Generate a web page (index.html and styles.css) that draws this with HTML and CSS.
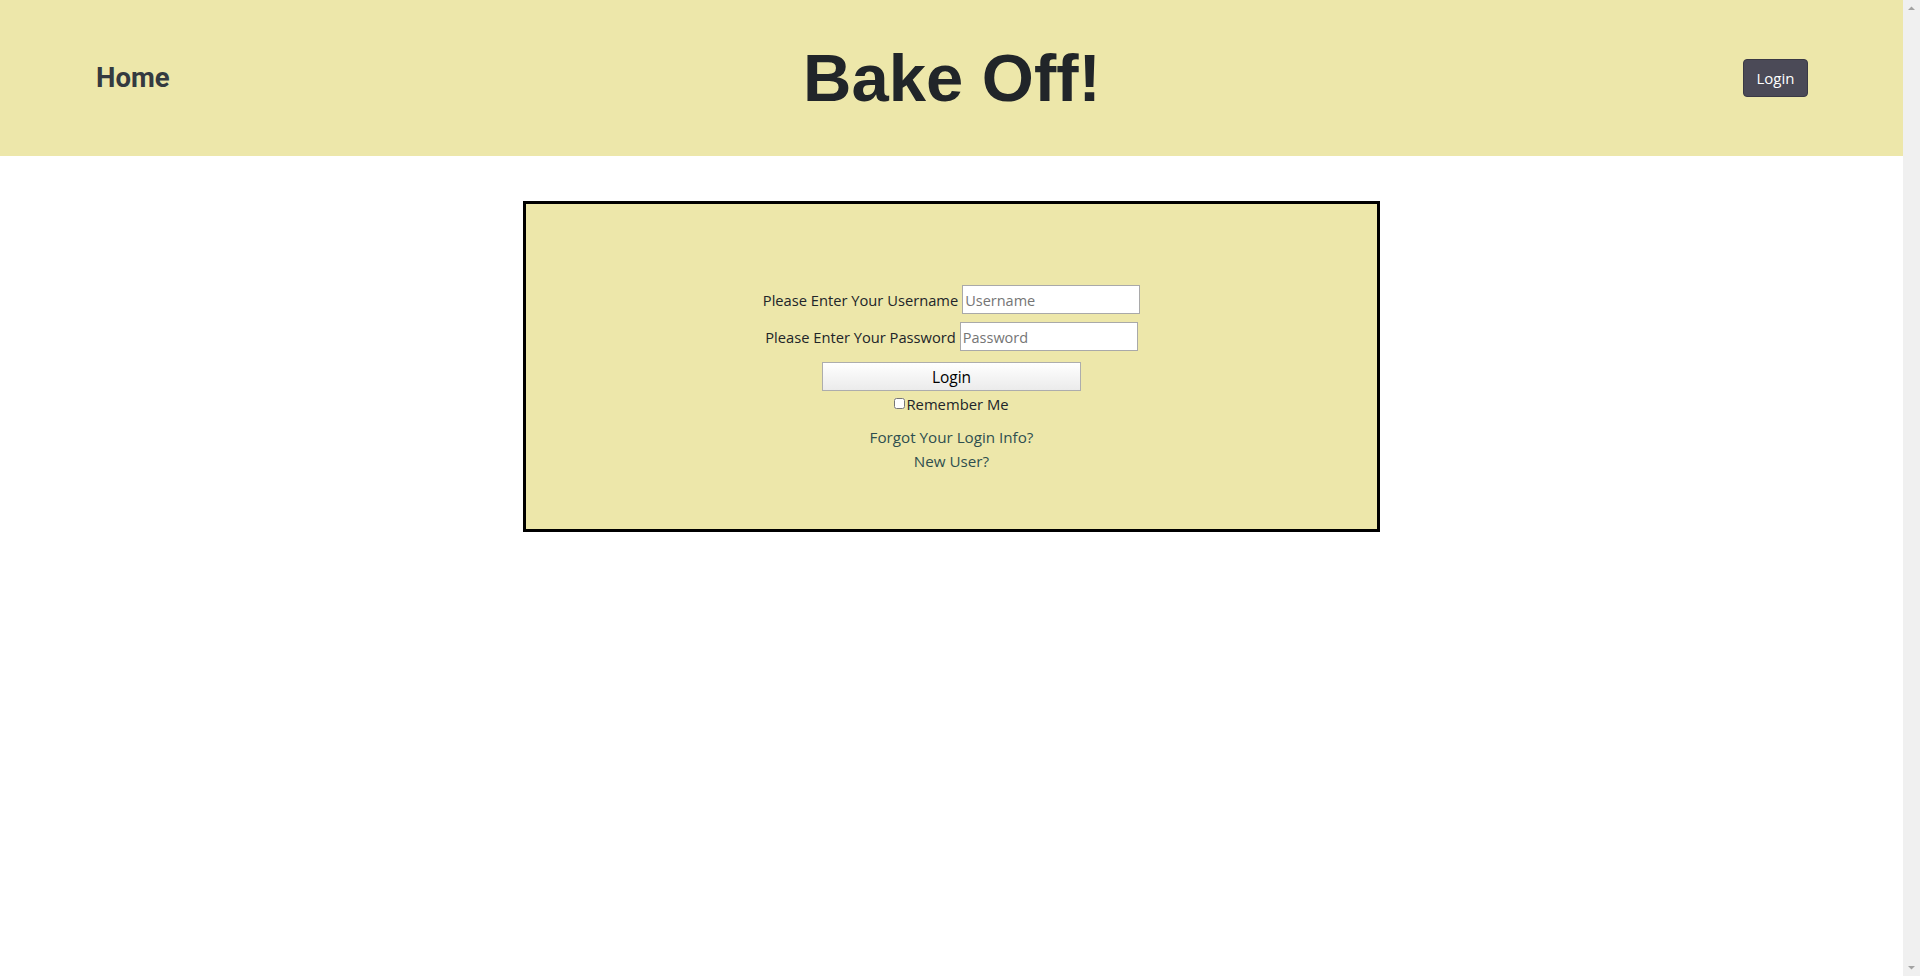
FILE: index.html
```html
<!DOCTYPE html>
<html lang="en">
<head>
<meta charset="utf-8">
<title>Bake Off!</title>
<link rel="stylesheet" href="styles.css">
</head>
<body>
<div class="app">
  <header class="topbar">
    <div class="topbar-left"><a class="home-link" href="#">Home</a></div>
    <h1 class="site-title">Bake Off!</h1>
    <div class="topbar-right"><button class="nav-login" type="button">Login</button></div>
  </header>
  <main class="page">
    <section class="login-box">
      <form class="login-form">
        <div class="field-row">
          <label class="field-label" for="user">Please Enter Your Username</label>
          <input class="field-input" id="user" type="text" placeholder="Username">
        </div>
        <div class="field-row">
          <label class="field-label" for="pass">Please Enter Your Password</label>
          <input class="field-input" id="pass" type="password" placeholder="Password">
        </div>
        <button class="submit-btn" type="button">Login</button>
        <div class="remember-row">
          <input class="remember-check" id="remember" type="checkbox"><label for="remember">Remember Me</label>
        </div>
        <div class="links">
          <a class="form-link" href="#">Forgot Your Login Info?</a>
          <a class="form-link" href="#">New User?</a>
        </div>
      </form>
    </section>
  </main>
</div>
<div class="scrollbar" aria-hidden="true">
  <svg class="scroll-arrow" width="17" height="17" viewBox="0 0 17 17"><path d="M5 10 L8.5 6.5 L12 10 Z" fill="#a3a3a3"/></svg>
  <svg class="scroll-arrow" width="17" height="17" viewBox="0 0 17 17"><path d="M5 7 L8.5 10.5 L12 7 Z" fill="#a3a3a3"/></svg>
</div>
</body>
</html>
```
FILE: styles.css
```css
body {
  margin: 0;
  display: flex;
  min-height: 100vh;
  font-family: "Open Sans", "Noto Sans", sans-serif;
  color: #212529;
  background: #ffffff;
}
.app {
  flex: 1;
  min-width: 0;
}
.scrollbar {
  width: 17px;
  flex: none;
  background: #f0f0f0;
  display: flex;
  flex-direction: column;
  justify-content: space-between;
}
.scroll-arrow {
  display: block;
}
.topbar {
  display: grid;
  grid-template-columns: 1fr auto 1fr;
  align-items: center;
  height: 156px;
  background: #ede7aa;
  padding: 0 95px 0 96px;
  box-sizing: border-box;
}
.topbar-left {
  display: flex;
  align-items: center;
}
.home-link {
  font-family: Roboto, "Liberation Sans", sans-serif;
  font-weight: 700;
  font-size: 27.5px;
  color: #343a40;
  text-decoration: none;
  margin-top: -2px;
}
.site-title {
  margin: 0;
  font-family: "Liberation Sans", Arial, sans-serif;
  font-weight: 700;
  font-size: 67px;
  line-height: 1;
  color: #212529;
  margin-top: -2px;
}
.topbar-right {
  display: flex;
  justify-content: flex-end;
  align-items: center;
}
.nav-login {
  width: 65px;
  height: 38px;
  padding: 0;
  background: #4b4a57;
  border: 1px solid #3a3945;
  border-radius: 4px;
  color: #ffffff;
  font-family: "Open Sans", "Noto Sans", sans-serif;
  font-size: 15px;
}
.page {
  display: flex;
  justify-content: center;
  padding-top: 45px;
}
.login-box {
  width: 857px;
  height: 331px;
  box-sizing: border-box;
  border: 3px solid #000000;
  background: #ede7aa;
}
.login-form {
  display: flex;
  flex-direction: column;
  align-items: center;
  padding-top: 81px;
  font-size: 14.7px;
}
.field-row {
  display: flex;
  align-items: center;
  gap: 4px;
  height: 29px;
  margin-bottom: 8px;
}
.field-label {
  color: #212529;
}
.field-input {
  width: 178px;
  height: 29px;
  box-sizing: border-box;
  margin: 0;
  padding: 1px 2px 0;
  border: 1px solid #a9a9a9;
  background: #ffffff;
  font-family: "Open Sans", "Noto Sans", sans-serif;
  font-size: 14.5px;
  color: #212529;
}
.field-input::placeholder {
  color: #757575;
}
.submit-btn {
  margin-top: 3px;
  width: 259px;
  height: 29px;
  padding: 0;
  border: 1px solid #adadad;
  background: linear-gradient(#ffffff, #ebebeb);
  font-family: "Open Sans", "Noto Sans", sans-serif;
  font-size: 15.5px;
  color: #000000;
}
.remember-row {
  display: flex;
  align-items: center;
  height: 22px;
  margin-top: 2px;
  color: #212529;
  font-size: 14.8px;
}
.remember-check {
  width: 11px;
  height: 11px;
  margin: 0 1px 2px 0;
}
.links {
  display: flex;
  flex-direction: column;
  align-items: center;
  margin-top: 10px;
  line-height: 24px;
  font-size: 15.2px;
}
.form-link {
  color: #2f4f4f;
  text-decoration: none;
}
```
